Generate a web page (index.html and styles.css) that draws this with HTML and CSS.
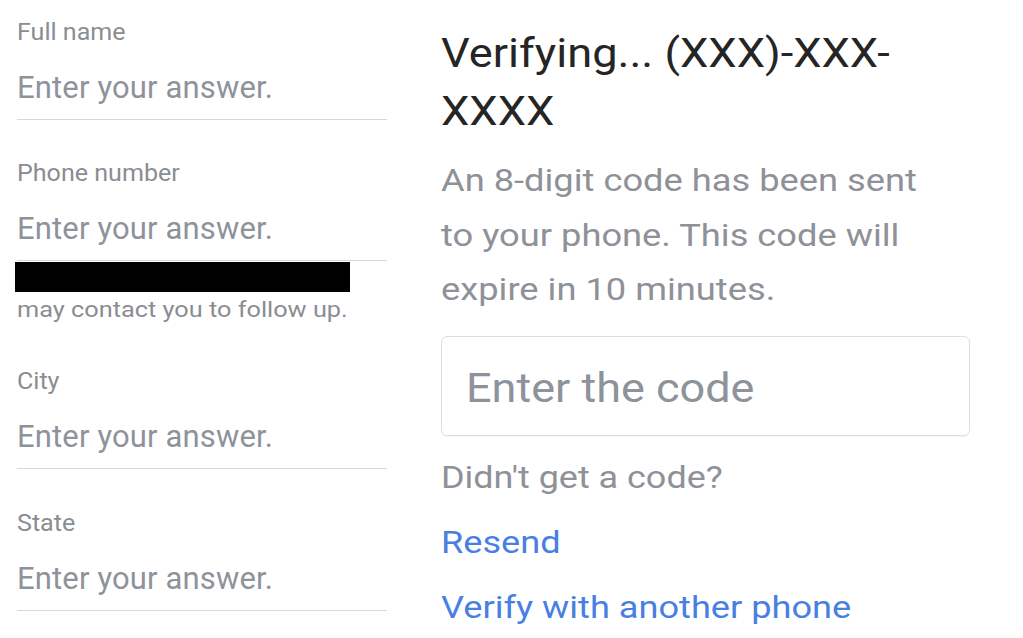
FILE: index.html
```html
<!DOCTYPE html>
<html>
<head>
<meta charset="utf-8">
<link rel="stylesheet" href="styles.css">
</head>
<body>
<div class="page">
  <div class="form">
    <div class="field first">
      <div class="label">Full name</div>
      <div class="input">Enter your answer.</div>
    </div>
    <div class="field">
      <div class="label">Phone number</div>
      <div class="input">Enter your answer.</div>
    </div>
    <div class="helper">
      <span class="redact"></span>
      <div class="helper-text">may contact you to follow up.</div>
    </div>
    <div class="field city">
      <div class="label">City</div>
      <div class="input">Enter your answer.</div>
    </div>
    <div class="field state">
      <div class="label">State</div>
      <div class="input">Enter your answer.</div>
    </div>
  </div>
  <div class="verify">
    <h1 class="title">Verifying... (XXX)-XXX-XXXX</h1>
    <p class="desc">An 8-digit code has been sent to your phone. This code will expire in 10 minutes.</p>
    <div class="code-box"><span class="code-ph">Enter the code</span></div>
    <p class="nocode">Didn't get a code?</p>
    <a class="link resend" href="#">Resend</a>
    <a class="link another" href="#">Verify with another phone</a>
  </div>
</div>
</body>
</html>
```

FILE: styles.css
```css
html, body {
  margin: 0;
  padding: 0;
  background: #ffffff;
}
body {
  font-family: Roboto, "Liberation Sans", sans-serif;
}
.page {
  display: flex;
  align-items: flex-start;
}
.form {
  width: 370px;
  padding-left: 17px;
  padding-top: 18px;
}
.field {
  margin-top: 39px;
}
.field.first {
  margin-top: 0;
}
.field.city {
  margin-top: 42px;
}
.field.state {
  margin-top: 40px;
}
.label {
  font-size: 23px;
  line-height: 30px;
  color: #8a8d92;
  margin-bottom: 20px;
  transform: scaleX(1.09);
  transform-origin: left center;
}
.input {
  font-size: 31px;
  line-height: 40px;
  color: #8e939b;
  padding-bottom: 11px;
  border-bottom: 1px solid #d8d8d8;
  letter-spacing: 0.15px;
}
.helper {
  margin-top: 1px;
}
.redact {
  display: block;
  width: 335px;
  height: 30px;
  margin-left: -2px;
  background: #000;
}
.helper-text {
  font-size: 22px;
  line-height: 30px;
  margin-top: 3px;
  color: #8a8d92;
  transform: scaleX(1.15);
  transform-origin: left center;
}
.verify {
  margin-left: 54px;
  padding-top: 25px;
  width: 529px;
}
.title {
  margin: 0;
  width: 420px;
  font-size: 40px;
  line-height: 58px;
  font-weight: 400;
  color: #252525;
  transform: scaleX(1.13);
  transform-origin: left center;
}
.desc {
  margin: 13px 0 0;
  width: 420px;
  font-size: 31px;
  line-height: 54.5px;
  color: #8e9198;
  transform: scaleX(1.17);
  transform-origin: left center;
}
.code-box {
  box-sizing: border-box;
  margin-top: 18px;
  height: 100px;
  border: 1px solid #dedede;
  border-radius: 6px;
  box-shadow: 0 1px 1px rgba(0,0,0,0.04);
  display: flex;
  align-items: center;
  padding: 5px 24px 0;
}
.code-ph {
  font-size: 40px;
  color: #8e939b;
  transform: scaleX(1.125);
  transform-origin: left center;
}
.nocode {
  margin: 15px 0 0;
  font-size: 31px;
  line-height: 54.5px;
  color: #8e9198;
  transform: scaleX(1.16);
  transform-origin: left center;
}
.link {
  display: block;
  margin-top: 10px;
  font-size: 32px;
  line-height: 54.5px;
  color: #4a7fe2;
  text-decoration: none;
  transform: scaleX(1.13);
  transform-origin: left center;
}
```
